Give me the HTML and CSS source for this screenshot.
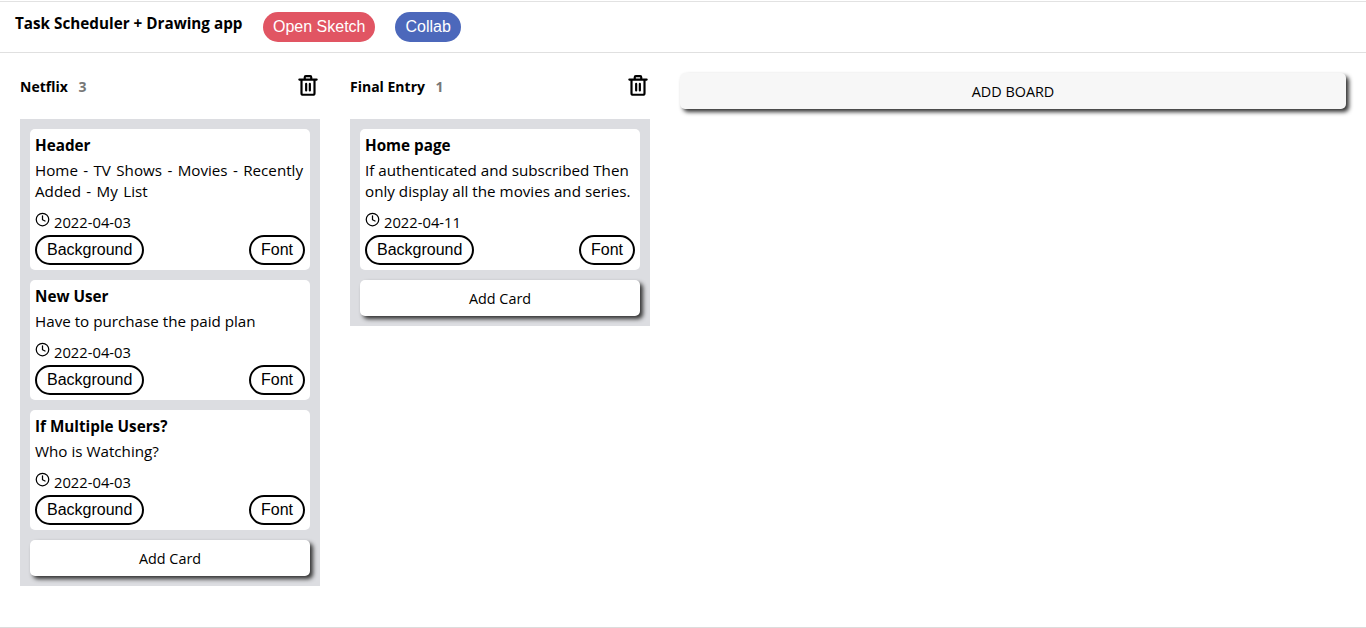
FILE: index.html
```html
<!DOCTYPE html>
<html lang="en">
<head>
<meta charset="utf-8">
<title>Task Scheduler + Drawing app</title>
<link rel="stylesheet" href="styles.css">
</head>
<body>
<div class="page">
  <header class="topbar">
    <h1 class="brand">Task Scheduler + Drawing app</h1>
    <button class="nav-pill red">Open Sketch</button>
    <button class="nav-pill blue">Collab</button>
  </header>
  <main class="boards">
    <section class="board">
      <div class="board-head">
        <h2 class="board-title">Netflix <span class="count">3</span></h2>
        <svg class="trash" viewBox="0 0 24 24"><path d="M4 7h16M10 3.8h4a1 1 0 0 1 1 1V7H9V4.8a1 1 0 0 1 1-1zM6 7v12.5A1.5 1.5 0 0 0 7.500 21h9a1.500 1.500 0 0 0 1.500-1.500V7M10.300 11v6M13.700 11v6"/></svg>
      </div>
      <div class="list">
        <article class="card">
          <h3 class="card-title">Header</h3>
          <p class="card-text spaced">Home - TV Shows - Movies - Recently Added - My List</p>
          <div class="date"><svg class="clock" viewBox="0 0 24 24"><circle cx="12" cy="12" r="10"/><path d="M12 6v6.500l4 2"/></svg><span>2022-04-03</span></div>
          <div class="tags"><button class="tag">Background</button><button class="tag">Font</button></div>
        </article>
        <article class="card">
          <h3 class="card-title">New User</h3>
          <p class="card-text">Have to purchase the paid plan</p>
          <div class="date"><svg class="clock" viewBox="0 0 24 24"><circle cx="12" cy="12" r="10"/><path d="M12 6v6.500l4 2"/></svg><span>2022-04-03</span></div>
          <div class="tags"><button class="tag">Background</button><button class="tag">Font</button></div>
        </article>
        <article class="card">
          <h3 class="card-title">If Multiple Users?</h3>
          <p class="card-text">Who is Watching?</p>
          <div class="date"><svg class="clock" viewBox="0 0 24 24"><circle cx="12" cy="12" r="10"/><path d="M12 6v6.500l4 2"/></svg><span>2022-04-03</span></div>
          <div class="tags"><button class="tag">Background</button><button class="tag">Font</button></div>
        </article>
        <button class="add-card">Add Card</button>
      </div>
    </section>
    <section class="board">
      <div class="board-head">
        <h2 class="board-title">Final Entry <span class="count">1</span></h2>
        <svg class="trash" viewBox="0 0 24 24"><path d="M4 7h16M10 3.8h4a1 1 0 0 1 1 1V7H9V4.8a1 1 0 0 1 1-1zM6 7v12.5A1.5 1.5 0 0 0 7.500 21h9a1.500 1.500 0 0 0 1.500-1.500V7M10.300 11v6M13.700 11v6"/></svg>
      </div>
      <div class="list">
        <article class="card">
          <h3 class="card-title">Home page</h3>
          <p class="card-text">If authenticated and subscribed Then only display all the movies and series.</p>
          <div class="date"><svg class="clock" viewBox="0 0 24 24"><circle cx="12" cy="12" r="10"/><path d="M12 6v6.500l4 2"/></svg><span>2022-04-11</span></div>
          <div class="tags"><button class="tag">Background</button><button class="tag">Font</button></div>
        </article>
        <button class="add-card">Add Card</button>
      </div>
    </section>
    <button class="add-board">ADD BOARD</button>
  </main>
</div>
</body>
</html>
```
FILE: styles.css
```css
* { box-sizing: border-box; }
html, body { margin: 0; padding: 0; background: #fff; }
body { font-family: "Open Sans", "Noto Sans", sans-serif; color: #000; overflow: hidden; }
.page {
  height: 627px;
  margin-top: 1px;
  border-top: 1px solid #e2e2e2;
  border-bottom: 1px solid #dcdcdc;
  display: flex;
  flex-direction: column;
}
.topbar {
  height: 51px;
  border-bottom: 1px solid #e0e0e0;
  display: flex;
  align-items: flex-start;
  padding: 10px 0 0 15px;
}
.brand {
  margin: 0 20.500px 0 0;
  font-size: 15.25px;
  line-height: 23px;
  font-weight: 700;
  white-space: nowrap;
}
.nav-pill {
  height: 30px;
  margin: 0 20px 0 0;
  padding: 0 10px;
  border: 0;
  border-radius: 15px;
  color: #fff;
  font-family: "Liberation Sans", Arial, sans-serif;
  font-size: 16px;
}
.red { background: #e15563; }
.blue { background: #4c68bb; }
.boards {
  display: flex;
  align-items: flex-start;
  gap: 30px;
  padding: 20px 20px 0;
}
.board { width: 300px; flex: none; }
.board-head {
  height: 46px;
  display: flex;
  justify-content: space-between;
  align-items: flex-start;
}
.board-title {
  margin: 3px 0 0;
  font-size: 14px;
  line-height: 22px;
  font-weight: 700;
}
.count { color: #777; margin-left: 7px; }
.trash {
  width: 26px;
  height: 26px;
  margin-top: -1px;
  margin-right: -1px;
  fill: none;
  stroke: #000;
  stroke-width: 2;
  stroke-linecap: round;
  stroke-linejoin: round;
}
.list {
  background: #dcdde1;
  padding: 10px;
  display: flex;
  flex-direction: column;
  gap: 10px;
}
.card {
  background: #fff;
  border-radius: 5px;
  padding: 5px;
}
.card-title {
  margin: 0;
  font-size: 15.25px;
  line-height: 22px;
  font-weight: 700;
}
.card-text {
  margin: 4px 0 0;
  font-size: 15.2px;
  line-height: 21px;
}
.spaced { word-spacing: 1.4px; }
.date {
  display: flex;
  align-items: flex-start;
  gap: 4px;
  margin-top: 10px;
  font-size: 14.75px;
  line-height: 20px;
  height: 20px;
}
.clock {
  width: 15px;
  height: 15px;
  fill: none;
  stroke: #000;
  stroke-width: 2;
  stroke-linecap: round;
  stroke-linejoin: round;
}
.tags {
  display: flex;
  justify-content: space-between;
  margin-top: 3px;
}
.tag {
  height: 30px;
  padding: 0 10px;
  border: 2px solid #000;
  border-radius: 15px;
  background: #fff;
  color: #000;
  font-family: "Liberation Sans", Arial, sans-serif;
  font-size: 16px;
}
.add-card, .add-board {
  height: 36px;
  border: 0;
  border-radius: 5px;
  color: #000;
  font-family: "Open Sans", "Noto Sans", sans-serif;
  font-size: 14.4px;
  box-shadow: 3px 3px 4px #333;
}
.add-card { background: #fff; }
.add-board {
  flex: 1;
  background: #f7f7f7;
}
```
